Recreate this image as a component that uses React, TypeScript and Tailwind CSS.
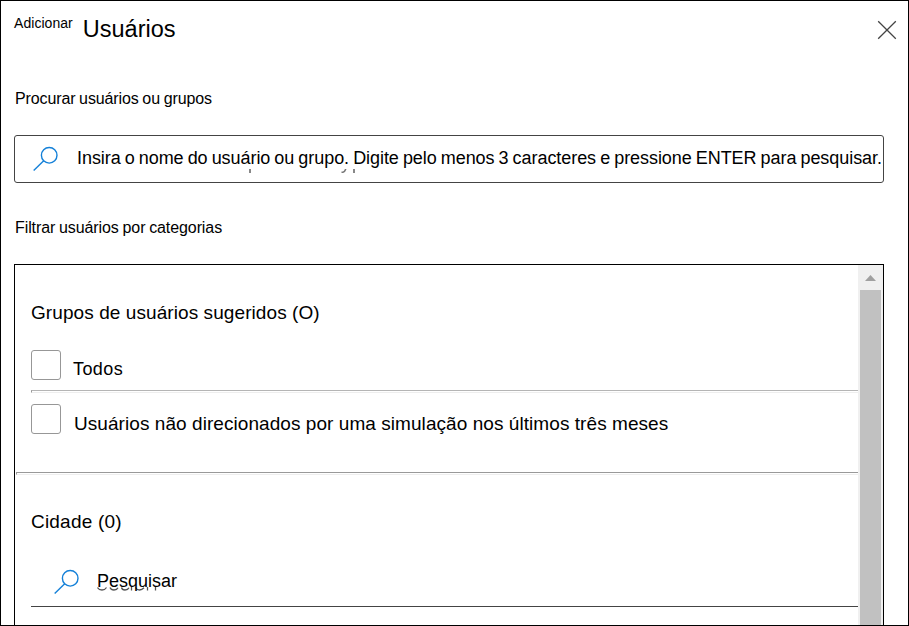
import type { ReactNode } from 'react';

function SearchIcon() {
  return (
    <svg className="-ml-px h-6 w-6 shrink-0 overflow-visible" viewBox="0 0 24 24" fill="none" stroke="#1480d8" strokeWidth="1.4">
      <circle cx="16.2" cy="8.3" r="7.8" />
      <path d="M10.7 13.8 0.7 23.5" />
    </svg>
  );
}

function CheckRow({ children, className }: { children: ReactNode; className: string }) {
  return (
    <label className="flex h-[30px] items-start">
      <span className="h-[30px] w-[30px] shrink-0 rounded-[3px] border border-[#979797] bg-white" />
      <span className={`whitespace-nowrap ${className}`}>{children}</span>
    </label>
  );
}

export default function App() {
  return (
    <div className="flex h-[626px] w-[909px] flex-col overflow-hidden border border-black bg-white pl-[13px] pr-[24px] font-['Liberation_Sans',Arial,sans-serif] text-black">
      <header className="flex h-[82px] shrink-0 items-start">
        <span className="mt-[14px] text-[14px] leading-4 tracking-[0.05px]">Adicionar</span>
        <h1 className="ml-[10px] mt-[14px] text-[23.5px] leading-7">Usuários</h1>
        <button aria-label="Fechar" className="-mr-[13px] ml-auto mt-[19px]">
          <svg className="h-5 w-5" viewBox="0 0 20 20" stroke="#444" strokeWidth="1.3">
            <path d="M1.2 1.2 18.8 18.8M18.8 1.2 1.2 18.8" />
          </svg>
        </button>
      </header>

      <h2 className="ml-px mt-[6px] h-5 shrink-0 whitespace-nowrap text-[16px] leading-5 tracking-[-0.12px] [word-spacing:-0.6px]">Procurar usuários ou grupos</h2>
      <div className="relative mt-[26px] flex h-12 w-[870px] shrink-0 items-center rounded-[3px] border border-[#444] pl-[19px]">
        <SearchIcon />
        <span className="mb-[2px] ml-[20px] whitespace-nowrap text-[18px] leading-6 tracking-[-0.06px] [word-spacing:-0.85px]">
          Insira o nome do usuário ou grupo. Digite pelo menos 3 caracteres e pressione ENTER para pesquisar.
        </span>
        <span className="absolute left-[234px] top-[33px] h-1 w-[2px] bg-[#888]" />
        <svg className="absolute left-[326px] top-[33px] h-1 w-[6px]" viewBox="0 0 6 4" fill="none" stroke="#777" strokeWidth="1.6">
          <path d="M0.5 3.2H2Q3.7 3 4.8 0" />
        </svg>
        <span className="absolute left-[338px] top-[33px] h-1 w-[2px] bg-[#888]" />
      </div>

      <h2 className="ml-px mt-[35px] h-5 shrink-0 whitespace-nowrap text-[16px] leading-5 tracking-[-0.09px] [word-spacing:-0.6px]">Filtrar usuários por categorias</h2>
      <section className="mt-[26px] flex w-[870px] grow border-x border-t border-black">
        <div className="flex grow flex-col">
          <div className="flex flex-col pl-4">
            <h3 className="mt-[36px] h-6 whitespace-nowrap text-[19px] leading-6 tracking-[0.08px]">Grupos de usuários sugeridos (O)</h3>
            <div className="mt-[25px]">
              <CheckRow className="ml-3 mt-[7px] text-[18px] leading-6 tracking-[0.4px]">Todos</CheckRow>
            </div>
            <div className="mb-[11px] mt-[10px] h-[3px] border-b border-l border-t border-b-[#eee] border-l-[#999] border-t-[#b5b5b5]" />
            <CheckRow className="ml-[13px] mt-[8px] text-[19px] leading-6 tracking-[0.06px]">
              Usuários não direcionados por uma simulação nos últimos três meses
            </CheckRow>
          </div>
          <div className="ml-px mt-[38px] h-[3px] border-b border-l border-t border-b-[#eee] border-l-[#999] border-t-[#999]" />
          <div className="flex flex-col pl-4">
            <h3 className="mt-[35px] h-6 whitespace-nowrap text-[19px] leading-6 tracking-[0.2px]">Cidade (0)</h3>
            <div className="relative mt-[25px] flex h-[48px] items-start border-b border-[#444] pl-6 pt-[11px]">
              <SearchIcon />
              <svg className="absolute left-[66px] top-[28px] h-[4px] w-[62px]" viewBox="0 0 62 4" fill="none" stroke="#555" strokeWidth="1.3">
                <path d="M0.5 0.5Q2 3 5 3T9.5 0.5M13 0.5Q14 3 17 3T21 0.8M24.5 0.5Q25 3 28 3T32 0.8M34.5 0V3.5M38.5 0.5Q40 3 42.5 3T47 0.8M50.5 0V3.5M58.5 0V3.5" />
              </svg>
              <span className="relative -mt-px ml-[19px] text-[18px] leading-6">Pesquisar</span>
            </div>
          </div>
        </div>
        <div className="flex w-[25px] shrink-0 flex-col items-center bg-[#f0f0f0]">
          <svg className="h-[25px] w-[25px] shrink-0" viewBox="0 0 25 25">
            <path d="M7 16 12.5 10 18 16Z" fill="#a0a0a0" />
          </svg>
          <div className="w-[21px] grow bg-[#c1c1c1]" />
        </div>
      </section>
    </div>
  );
}
